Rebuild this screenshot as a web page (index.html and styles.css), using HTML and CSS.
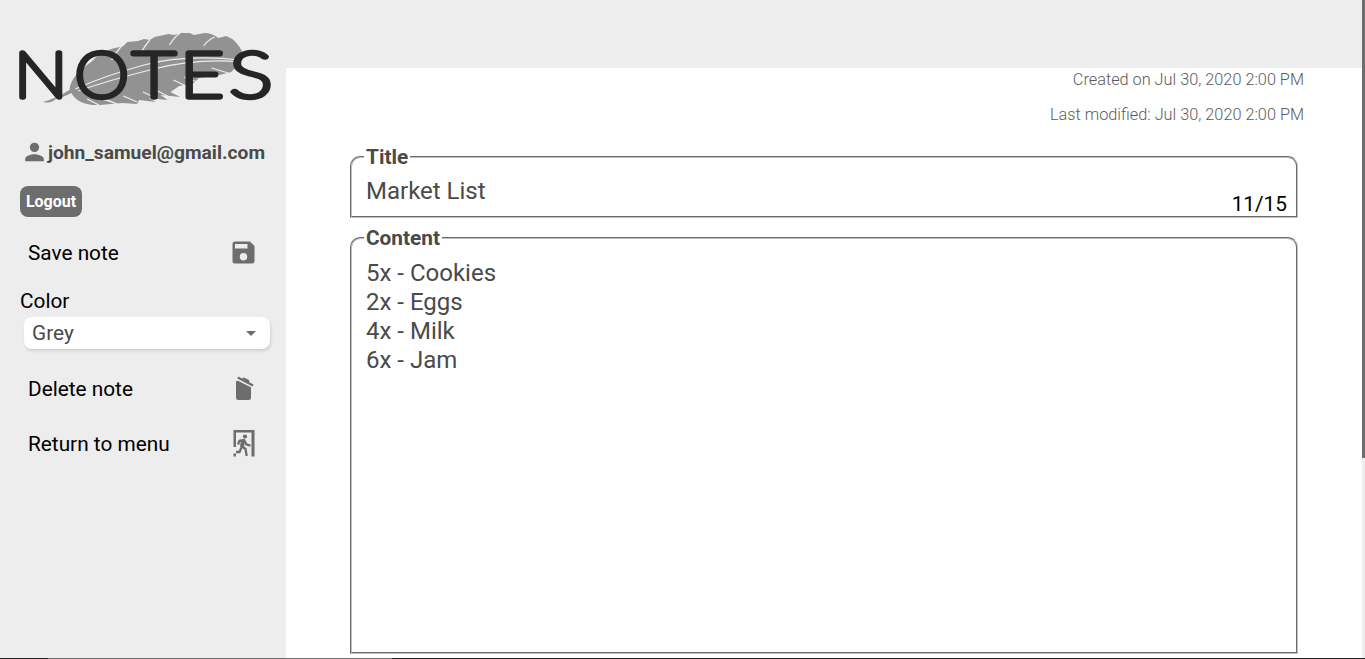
FILE: index.html
```html
<!DOCTYPE html>
<html lang="en">
<head>
<meta charset="utf-8">
<title>Notes</title>
<link rel="stylesheet" href="styles.css">
</head>
<body>
<div class="app">
  <aside class="sidebar">
    <svg class="logo" width="254" height="76" viewBox="0 0 254 76">
      <g transform="translate(-.5 0) scale(.98 1)">
      <path class="feather" d="M24 70Q38 66 51 58C52 47 60 39 73 30Q84 18 106 14L110 10 121 9 127 7 133 8 138 5 152 2 158 3 165 1 174 1 178 3 189 1Q196 1 203 6L211 4Q222 8 228 21L221 29 222 34 216 40 204 43 183 46 178 51 163 54 154 60 164 65 144 63 151 68 132 66 139 70 122 68 120 72 105 71 82 73Q60 74 53 61Q43 66 37 67Q32 72 24 70Z"/>
      <path class="quill" d="M57 57Q86 44 127 33T226 28M60 59Q92 48 137 37T226 30"/>
      <path class="rib" d="M106 12Q97 22 94 28M133 8Q126 16 123 23M164 1Q158 5 153 13M199 5Q192 8 188 14M81 73L69 67M100 72Q90 68 80 66M120 70L106 64M139 66L126 60M170 54L157 48M181 50L168 45M213 41L196 36M151 64L137 57"/>
      </g>
      <g class="word">
        <text x="-6" y="65" textLength="53.500" lengthAdjust="spacingAndGlyphs">N</text>
        <text x="54.500" y="65" textLength="54.500" lengthAdjust="spacingAndGlyphs">O</text>
        <text x="112.500" y="65" textLength="43" lengthAdjust="spacingAndGlyphs">T</text>
        <text x="160" y="65" textLength="44" lengthAdjust="spacingAndGlyphs">E</text>
        <text x="209.500" y="65" textLength="43" lengthAdjust="spacingAndGlyphs">S</text>
      </g>
    </svg>
    <div class="user">
      <svg width="28" height="28" viewBox="0 0 24 24"><path d="M12.400 12a4 4 0 1 0 0-8 4 4 0 0 0 0 8zm0 2c-2.670 0-8 1.340-8 4v2h16v-2c0-2.660-5.330-4-8-4z"/></svg>
      <span>john_samuel@gmail.com</span>
    </div>
    <button class="logout">Logout</button>
    <div class="action save"><span>Save note</span>
      <svg width="23" height="23" viewBox="0 0 23 23"><path fill-rule="evenodd" d="M3 .5h15l4.5 4.5v15a2.5 2.5 0 0 1-2.5 2.5H3A2.5 2.5 0 0 1 .5 20V3A2.5 2.5 0 0 1 3 .5zM3 3v4.5h12.500V3zM11.500 12a3.700 3.700 0 1 0 0 7.400 3.700 3.700 0 0 0 0-7.400z"/></svg>
    </div>
    <div class="color-label">Color</div>
    <div class="select"><span>Grey</span><i class="caret"></i></div>
    <div class="action delete"><span>Delete note</span>
      <svg width="23" height="26" viewBox="0 0 23 26"><path d="M4 6.500Q5 5.500 7 6L19 12V22.500a2.500 2.500 0 0 1-2.500 2.500h-10A2.500 2.500 0 0 1 4 22.500z"/><path class="gap" d="M5 4L21 12.200"/><path class="lid" d="M5.800 2.500L21 10.500"/><path d="M10 3.500L12 2.500 17 5 17.500 8z"/></svg>
    </div>
    <div class="action return"><span>Return to menu</span>
      <svg width="23" height="28" viewBox="0 0 23 28"><path d="M1.500 18V1h21v26.500H19.500V3.500H4V18z"/><circle cx="13" cy="7.500" r="2.100"/><path class="runner" d="M6 15.500l1.500-3.700 4.500-.8 2.500 4.500 4 1.200M11 11l-1.500 6 4 3 1.200 7M9.500 18.500l-2 4.500H4"/><path class="torso" d="M11 12L10 17.500"/><path d="M1.500 24.500H4v3H1.500z"/></svg>
    </div>
  </aside>
  <main class="main">
    <header class="topbar"></header>
    <div class="meta"><p>Created on Jul 30, 2020 2:00 PM</p><p>Last modified: Jul 30, 2020 2:00 PM</p></div>
    <fieldset class="field title-field"><legend>Title</legend><div class="value">Market List</div><span class="count">11/15</span></fieldset>
    <fieldset class="field content-field"><legend>Content</legend><div class="value">5x - Cookies<br>2x - Eggs<br>4x - Milk<br>6x - Jam</div></fieldset>
  </main>
  <div class="scroll"><div class="thumb"></div></div>
</div>
<div class="bottom-line"></div>
</body>
</html>
```
FILE: styles.css
```css
* { box-sizing: border-box; }
body {
  margin: 0;
  height: 659px;
  overflow: hidden;
  font-family: Roboto, "Liberation Sans", sans-serif;
  font-size: 20px;
  color: #000;
  background: #fff;
}
.app { display: flex; height: 658px; }
.sidebar {
  width: 286px;
  flex: none;
  display: flex;
  flex-direction: column;
  align-items: flex-start;
  padding: 32px 15px 0 20px;
  background: #ededed;
}
.sidebar svg { fill: #6d6d6d; flex: none; }
.logo { overflow: visible; }
.logo .feather { fill: #929292; }
.logo .quill { fill: none; stroke: #ededed; stroke-width: 1.2; }
.logo .rib { fill: none; stroke: #ededed; stroke-width: 1.3; }
.word {
  font-family: Lato, sans-serif;
  font-weight: 100;
  font-size: 62.5px;
  fill: #252525;
  stroke: #252525;
  stroke-width: 5.4;
  stroke-linejoin: round;
}
.user {
  display: flex;
  align-items: center;
  height: 28px;
  margin-top: 30px;
  font-size: 19.2px;
  font-weight: 700;
  color: #4a4a4a;
}
.logout {
  width: 62px;
  height: 31px;
  margin-top: 20px;
  padding: 0;
  border: 0;
  border-radius: 8px;
  background: #6d6d6d;
  color: #fff;
  font: 700 16px Roboto, sans-serif;
}
.action {
  display: flex;
  justify-content: space-between;
  align-items: center;
  width: 235px;
  height: 30px;
  padding-left: 8px;
  font-size: 20.8px;
}
.action span { padding-top: 2px; }
.save { margin-top: 20px; }
.color-label { height: 24px; margin-top: 22px; line-height: 24px; font-size: 20.8px; }
.select {
  display: flex;
  align-items: center;
  justify-content: space-between;
  width: 246px;
  height: 32px;
  margin: 4px 0 0 4px;
  padding: 0 14px 0 8px;
  border-radius: 8px;
  background: #fff;
  box-shadow: 1px 2px 3px rgba(0, 0, 0, .12);
  color: #4a4a4a;
  font-size: 20.8px;
}
.caret { border: 5px solid transparent; border-top-color: #6d6d6d; border-bottom: 0; }
.delete { margin-top: 24px; }
.return { margin-top: 25px; }
.lid { stroke: #6d6d6d; stroke-width: 2.2; }
.gap { stroke: #ededed; stroke-width: 2; }
.runner { fill: none; stroke: #6d6d6d; stroke-width: 2.3; }
.torso { stroke: #6d6d6d; stroke-width: 4; }
.main { flex: 1; min-width: 0; }
.topbar { height: 68px; background: #ededed; }
.meta { height: 78px; padding-right: 58px; text-align: right; font-size: 16.3px; font-weight: 300; color: #5c5c5c; }
.meta p { margin: 0; height: 35px; line-height: 23px; }
.field {
  width: 948px;
  margin: 0 0 0 64px;
  padding: 0;
  border: 2px groove #c0c0c0;
  border-radius: 10px 10px 0 0;
  color: #4a4a4a;
  font-size: 24px;
}
.field legend { margin-left: 12px; padding: 0 2px; line-height: 22px; font-size: 20.8px; font-weight: 700; }
.value { padding-left: 14px; line-height: 29px; }
.title-field { height: 72px; display: flow-root; }
.title-field .value { padding-top: 9px; height: 25px; }
.count { display: block; padding-right: 9px; text-align: right; font-size: 20.8px; line-height: 22px; color: #000; }
.content-field { height: 427px; margin-top: 9px; }
.content-field legend { line-height: 24px; }
.content-field { margin-top: 8px; height: 428px; }
.content-field .value { padding-top: 9px; }
.scroll { width: 3px; flex: none; background: #ededed; }
.thumb { height: 458px; background: #6d6d6d; }
.bottom-line { height: 1px; background: linear-gradient(90deg, #222 48px, #6d6d6d 48px 392px, #222 392px); }
```
